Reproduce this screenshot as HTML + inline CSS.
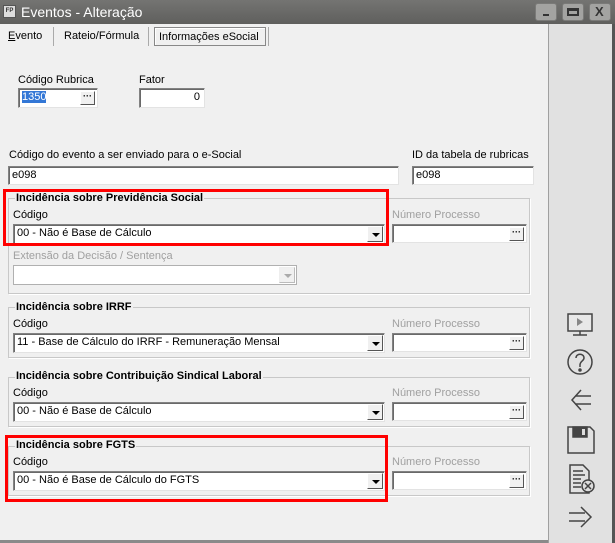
<!DOCTYPE html>
<html><head><meta charset="utf-8"><style>
*{margin:0;padding:0;box-sizing:border-box}
body{width:615px;height:543px;overflow:hidden;background:#f0f0f0;font-family:"Liberation Sans","DejaVu Sans",sans-serif;font-size:11px;color:#000;position:relative}
.a{position:absolute}
.t{position:absolute;white-space:nowrap;font-size:11px;line-height:13px}
.g{color:#a0a0a0}
.in{position:absolute;background:#fff;border:1px solid #828282;border-right-color:#e3e3e3;border-bottom-color:#e3e3e3;box-shadow:inset 1px 1px 0 #696969;font-size:11px;line-height:17px;padding-left:3px;white-space:nowrap;overflow:hidden}
.btn{position:absolute;right:2px;top:2px;width:15px;height:14px;background:#f0f0f0;border:1px solid;border-color:#fff #555 #555 #fff;font-size:9px;line-height:8px;text-align:center;font-weight:bold}
.dd{position:absolute;right:1px;top:1px;width:16px;bottom:1px;background:#f0f0f0;border:1px solid;border-color:#fff #555 #555 #fff}
.dd:after{content:"";position:absolute;left:4px;top:6px;border-left:4px solid transparent;border-right:4px solid transparent;border-top:4px solid #000}
.dd.dis:after{border-top-color:#aaa}
.grp{position:absolute;border:1px solid #c8c8c8;box-shadow:1px 1px 0 #fff}
.gt{position:absolute;font-weight:bold;background:#f0f0f0;padding:0 1px;white-space:nowrap;line-height:13px}
.red{position:absolute;border:3px solid #f00}
.wb{position:absolute;top:3px;width:22px;height:18px;background:#a3a3a1;border:1px solid #7a7a78;border-radius:3px}
</style></head><body>
<div class="a" style="left:0;top:0;width:615px;height:24px;background:linear-gradient(#747472,#5f5f5d)"></div>
<div class="a" style="left:3px;top:5px;width:13px;height:13px;background:#ddd;border:1px solid #555;font-size:6px;line-height:11px;text-align:center;font-weight:bold;color:#333">FP</div>
<div class="t" style="left:21px;top:4px;font-size:14px;line-height:16px;color:#fff">Eventos - Alteração</div>
<div class="wb" style="left:535px"><div class="a" style="left:7px;top:10px;width:6px;height:2px;background:#333"></div></div>
<div class="wb" style="left:562px"><div class="a" style="left:4px;top:4px;width:12px;height:8px;border:2px solid #333;border-top-width:3px"></div></div>
<div class="wb" style="left:589px"><div class="t" style="left:5px;top:1px;font-size:13px;font-weight:bold;color:#333">X</div></div>
<div class="a" style="left:548px;top:24px;width:1px;height:519px;background:#a0a0a0"></div>
<div class="a" style="left:549px;top:24px;width:63px;height:519px;background:#e1e1e1"></div>
<div class="a" style="left:612px;top:24px;width:3px;height:519px;background:#555"></div>
<div class="a" style="left:0;top:540px;width:548px;height:3px;background:#8a8a8a"></div>
<div class="t" style="left:8px;top:30px"><u>E</u>vento</div>
<div class="a" style="left:53px;top:27px;width:1px;height:19px;background:#aaa"></div>
<div class="t" style="left:64px;top:30px">Rateio/Fórmula</div>
<div class="a" style="left:148px;top:27px;width:1px;height:19px;background:#aaa"></div>
<div class="a" style="left:154px;top:27px;width:112px;height:19px;border:1px solid #888;box-shadow:inset 1px 1px 0 #fff"></div>
<div class="t" style="left:159px;top:31px">Informações eSocial</div>
<div class="a" style="left:268px;top:27px;width:1px;height:19px;background:#aaa"></div>
<div class="t" style="left:18px;top:74px">Código Rubrica</div>
<div class="in" style="left:18px;top:88px;width:80px;height:20px"><span style="background:#3377d6;color:#fff">1350</span><div class="btn">···</div></div>
<div class="t" style="left:139px;top:74px">Fator</div>
<div class="in" style="left:139px;top:88px;width:66px;height:20px;text-align:right;padding-right:4px">0</div>
<div class="t" style="left:9px;top:149px">Código do evento a ser enviado para o e-Social</div>
<div class="in" style="left:8px;top:166px;width:391px;height:19px">e098</div>
<div class="t" style="left:412px;top:149px">ID da tabela de rubricas</div>
<div class="in" style="left:412px;top:166px;width:122px;height:19px">e098</div>

<div class="grp" style="left:8px;top:198px;width:522px;height:96px"></div>
<div class="gt" style="left:15px;top:192px">Incidência sobre Previdência Social</div>
<div class="t" style="left:13px;top:209px">Código</div>
<div class="in" style="left:13px;top:224px;width:372px;height:20px">00 - Não é Base de Cálculo<div class="dd"></div></div>
<div class="t g" style="left:392px;top:209px">Número Processo</div>
<div class="in" style="left:392px;top:224px;width:135px;height:19px"><div class="btn">···</div></div>
<div class="t g" style="left:13px;top:250px">Extensão da Decisão / Sentença</div>
<div class="in" style="left:13px;top:265px;width:284px;height:20px;border-color:#b0b0b0;box-shadow:none"><div class="dd dis" style="border-color:#eee #bbb #bbb #eee"></div></div>
<div class="red" style="left:3px;top:189px;width:386px;height:57px"></div>

<div class="grp" style="left:8px;top:307px;width:522px;height:51px"></div>
<div class="gt" style="left:15px;top:301px">Incidência sobre IRRF</div>
<div class="t" style="left:13px;top:318px">Código</div>
<div class="in" style="left:13px;top:333px;width:372px;height:20px">11 - Base de Cálculo do IRRF - Remuneração Mensal<div class="dd"></div></div>
<div class="t g" style="left:392px;top:318px">Número Processo</div>
<div class="in" style="left:392px;top:333px;width:135px;height:19px"><div class="btn">···</div></div>

<div class="grp" style="left:8px;top:377px;width:522px;height:50px"></div>
<div class="gt" style="left:15px;top:370px">Incidência sobre Contribuição Sindical Laboral</div>
<div class="t" style="left:13px;top:387px">Código</div>
<div class="in" style="left:13px;top:402px;width:372px;height:20px">00 - Não é Base de Cálculo<div class="dd"></div></div>
<div class="t g" style="left:392px;top:387px">Número Processo</div>
<div class="in" style="left:392px;top:402px;width:135px;height:19px"><div class="btn">···</div></div>

<div class="grp" style="left:8px;top:446px;width:522px;height:50px"></div>
<div class="gt" style="left:15px;top:439px">Incidência sobre FGTS</div>
<div class="t" style="left:13px;top:456px">Código</div>
<div class="in" style="left:13px;top:471px;width:372px;height:20px">00 - Não é Base de Cálculo do FGTS<div class="dd"></div></div>
<div class="t g" style="left:392px;top:456px">Número Processo</div>
<div class="in" style="left:392px;top:471px;width:135px;height:19px"><div class="btn">···</div></div>
<div class="red" style="left:5px;top:435px;width:383px;height:67px"></div>

<svg class="a" style="left:549px;top:300px" width="63" height="243" viewBox="0 0 63 243" fill="none" stroke="#444" stroke-width="1.5">
<rect x="19" y="14" width="24" height="17" fill="#e8e8e8"/><path d="M28 18l6 4-6 4z" fill="#888" stroke="none"/><path d="M31 31v4M24 35h14"/>
<circle cx="31" cy="62" r="12"/><path d="M27 58c0-5 8-5 8 0 0 3-4 3-4 7v2"/><circle cx="31" cy="70" r="1" fill="#444"/>
<path d="M42 96H26M42 104H26M32 90l-9 10 9 10"/>
<path d="M19 127h22l4 4v22H19z"/><rect x="24" y="127" width="14" height="10" fill="#444"/><rect x="33" y="129" width="3" height="6" fill="#ddd" stroke="none"/>
<path d="M21 165h13l6 6v22H21z"/><path d="M24 171h10M24 175h12M24 179h8M24 183h8M24 187h8"/><circle cx="39" cy="186" r="6" fill="#ddd"/><path d="M36 183l6 6M42 183l-6 6"/>
<path d="M20 213h16M20 221h16M32 207l10 10-10 10"/>
</svg>
</body></html>
